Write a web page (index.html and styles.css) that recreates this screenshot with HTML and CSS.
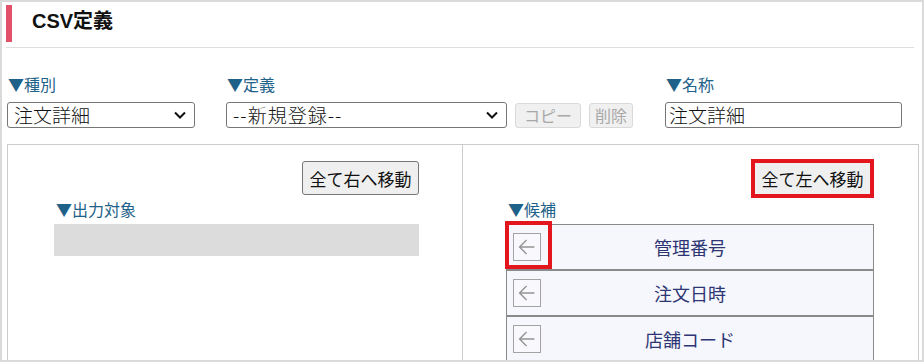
FILE: index.html
```html
<!DOCTYPE html>
<html lang="ja">
<head>
<meta charset="utf-8">
<title>CSV定義</title>
<link rel="stylesheet" href="styles.css">
</head>
<body>
<div class="frame">
  <div class="header">
    <span class="bar"></span>
    <h1 class="title">CSV定義</h1>
  </div>

  <div class="fields">
    <div class="field f-kind">
      <div class="label">▼種別</div>
      <div class="select s-kind">注文詳細</div>
    </div>
    <div class="field f-def">
      <div class="label">▼定義</div>
      <div class="controls">
        <div class="select s-def">--新規登録--</div>
        <button class="btn-dis b-copy" disabled>コピー</button>
        <button class="btn-dis b-del" disabled>削除</button>
      </div>
    </div>
    <div class="field f-name">
      <div class="label">▼名称</div>
      <div class="input">注文詳細</div>
    </div>
  </div>

  <div class="panels">
    <div class="panel panel-left">
      <div class="btn-row"><button class="btn">全て右へ移動</button></div>
      <div class="label sub">▼出力対象</div>
      <div class="empty-box"></div>
    </div>
    <div class="panel panel-right">
      <div class="btn-row"><span class="mark-wrap"><button class="btn">全て左へ移動</button></span></div>
      <div class="label sub">▼候補</div>
      <div class="list">
        <div class="row">
          <span class="arrow"><svg viewBox="0 0 28 28" width="28" height="28"><path d="M22 14H6M13.5 6.5L6 14l7.5 7.5" fill="none" stroke="#949494" stroke-width="1.5"/></svg></span>
          <span class="row-text">管理番号</span>
          <span class="mark"></span>
        </div>
        <div class="row">
          <span class="arrow"><svg viewBox="0 0 28 28" width="28" height="28"><path d="M22 14H6M13.5 6.5L6 14l7.5 7.5" fill="none" stroke="#949494" stroke-width="1.5"/></svg></span>
          <span class="row-text">注文日時</span>
        </div>
        <div class="row">
          <span class="arrow"><svg viewBox="0 0 28 28" width="28" height="28"><path d="M22 14H6M13.5 6.5L6 14l7.5 7.5" fill="none" stroke="#949494" stroke-width="1.5"/></svg></span>
          <span class="row-text">店舗コード</span>
        </div>
      </div>
    </div>
  </div>
</div>
</body>
</html>
```

FILE: styles.css
```css
* { box-sizing: border-box; }
html, body { margin: 0; padding: 0; background: #fff; }
body {
  font-family: "Noto Sans CJK JP", "Noto Sans", sans-serif;
  color: #111;
}
.frame {
  width: 924px;
  height: 362px;
  border: 2px solid #dadada;
  overflow: hidden;
  background: #fff;
}
.header {
  display: flex;
  align-items: center;
  height: 46px;
  margin: 0 8px 0 4px;
  padding-top: 3px;
  padding-bottom: 6px;
  border-bottom: 1px solid #dedede;
}
.bar {
  width: 6px;
  height: 37px;
  background: #e2506a;
  flex: none;
}
.title {
  margin: 0 0 0 20px;
  font-family: "Liberation Sans", "Noto Sans CJK JP", sans-serif;
  font-size: 20px;
  font-weight: bold;
  color: #111;
  line-height: 1;
  position: relative;
  top: -2px;
}
.fields {
  display: flex;
  margin: 25px 0 0 5px;
}
.label {
  font-size: 16px;
  line-height: 22px;
  color: #1e6189;
  height: 22px;
}
.field .label { margin-bottom: 7px; padding-left: 1px; }
.f-kind { width: 188px; margin-right: 31px; }
.f-def { width: 439px; }
.f-name { width: 237px; }
.controls { display: flex; align-items: center; }
.select, .input {
  height: 26px;
  border: 1px solid #767676;
  border-radius: 3px;
  background: #fff;
  font-size: 19px;
  line-height: 24px;
  padding-left: 6px;
  color: #111;
  white-space: nowrap;
  font-weight: 300;
}
.select {
  background-image: url("data:image/svg+xml,%3Csvg xmlns='http://www.w3.org/2000/svg' width='12' height='8' viewBox='0 0 12 8'%3E%3Cpath d='M1 1.5l5 5 5-5' fill='none' stroke='%23111' stroke-width='2'/%3E%3C/svg%3E");
  background-repeat: no-repeat;
  background-position: right 8px center;
}
.s-kind { width: 188px; }
.s-def { width: 281px; letter-spacing: 1px; }
.input { width: 237px; padding-left: 3px; }
.btn-dis {
  height: 25px;
  margin-left: 8px;
  border: 1px solid #d9d9d9;
  border-radius: 3px;
  background: #f0f0f0;
  color: #a8a8a8;
  font-family: inherit;
  font-size: 16px;
  line-height: 20px;
  padding: 0 2px;
}
.b-copy { width: 66px; }
.b-del { width: 44px; }
.panels {
  display: flex;
  margin: 16px 0 0 5px;
  width: 912px;
  height: 230px;
  border: 1px solid #cccccc;
  border-bottom: none;
}
.panel { padding-top: 16px; }
.panel-left {
  width: 455px;
  border-right: 1px solid #cccccc;
  padding-left: 46px;
  padding-right: 43px;
}
.panel-right {
  width: 455px;
  padding-left: 43px;
  padding-right: 44px;
}
.btn-row { display: flex; justify-content: flex-end; height: 34px; align-items: center; }
.btn {
  height: 34px;
  width: 117px;
  padding: 0;
  border: 1px solid #767676;
  border-radius: 3px;
  background: #efefef;
  color: #111;
  font-family: inherit;
  font-size: 17px;
}
.mark-wrap {
  display: flex;
  align-items: center;
  justify-content: center;
  width: 123px;
  height: 39px;
  border: 4px solid #e3161e;
  margin-right: 0;
}
.mark-wrap .btn {
  width: 115px;
  height: 31px;
  border-radius: 0;
  border-color: #efefef;
}
.label.sub { margin-top: 3px; padding-left: 2px; }
.empty-box {
  margin-top: 4px;
  height: 32px;
  background: #dcdcdc;
}
.list { margin-top: 4px; }
.row {
  position: relative;
  display: flex;
  align-items: center;
  height: 46px;
  border: 1px solid #8a8a8a;
  background: #f6f6fd;
  padding-left: 6px;
}
.arrow {
  width: 28px;
  height: 28px;
  border: 1px solid #a3a3a3;
  display: flex;
  align-items: center;
  justify-content: center;
  background: #f8f8fd;
  flex: none;
}
.arrow svg { display: block; }
.row-text {
  position: absolute;
  left: 0;
  right: 0;
  text-align: center;
  font-size: 18px;
  color: #2d3672;
  pointer-events: none;
}
.mark {
  position: absolute;
  left: -2px;
  top: -4px;
  width: 47px;
  height: 48px;
  border: 4px solid #e3161e;
}
```
